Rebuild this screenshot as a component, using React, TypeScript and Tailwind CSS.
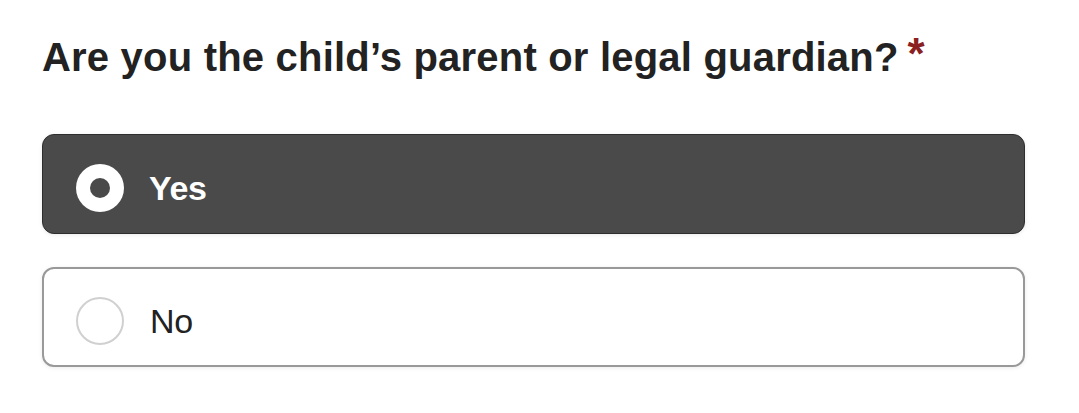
import { useState } from 'react';

const OPTIONS = ['Yes', 'No'];

export default function App() {
  const [value, setValue] = useState('Yes');

  return (
    <div className="min-h-screen bg-white px-[42px] pt-[33px]" style={{ fontFamily: '"Liberation Sans", Arial, sans-serif' }}>
      <fieldset>
        <legend className="flex items-start text-[40px] leading-[1.2] font-bold tracking-[0.2px] text-[#222]">
          Are you the child’s parent or legal guardian?
          <span className="ml-[9px] -mt-[1px] text-[44px] leading-none text-[#8a2020]">*</span>
        </legend>

        {/* Radio cards */}
        <div className="mt-[53px] flex w-[983px] flex-col gap-[33px]">
          {OPTIONS.map((opt) => {
            const selected = value === opt;
            return (
              <label
                key={opt}
                onClick={() => setValue(opt)}
                className={`flex h-[100px] cursor-pointer items-center rounded-[12px] px-[33px] pt-[8px] shadow-[0_1px_4px_rgba(0,0,0,0.08)] ${
                  selected
                    ? 'gap-[25px] border border-[#2e2e2e] bg-[#4a4a4a] text-white'
                    : 'gap-[26px] border-2 border-[#999] bg-white text-[#222]'
                }`}
              >
                {selected ? (
                  <span className="flex h-[48px] w-[48px] items-center justify-center rounded-full bg-white">
                    <span className="h-[20px] w-[20px] rounded-full bg-[#4a4a4a]" />
                  </span>
                ) : (
                  <span className="-ml-px h-[48px] w-[48px] rounded-full border-2 border-[#d0d0d0] bg-white" />
                )}
                <span className={`text-[34px] tracking-[-0.3px] ${selected ? 'font-bold' : 'font-normal'}`}>{opt}</span>
              </label>
            );
          })}
        </div>
      </fieldset>
    </div>
  );
}
